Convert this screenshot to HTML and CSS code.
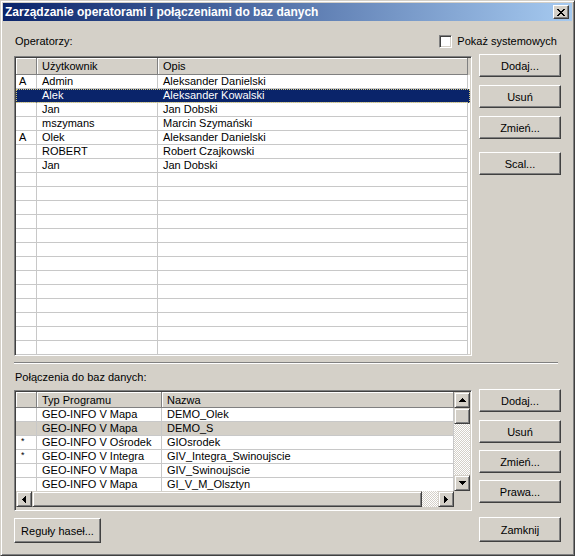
FILE: index.html
```html
<!DOCTYPE html>
<html lang="pl">
<head>
<meta charset="utf-8">
<title>Zarządzanie operatorami</title>
<link rel="stylesheet" href="styles.css">
</head>
<body>
<div class="window">
  <div class="titlebar">
    <span class="title">Zarządzanie operatorami i połączeniami do baz danych</span>
    <div class="close"><svg width="8" height="7" viewBox="0 0 8 7" shape-rendering="crispEdges"><path d="M0 0h2v1H0zM6 0h2v1H6zM1 1h2v1H1zM5 1h2v1H5zM2 2h4v1H2zM3 3h2v1H3zM2 4h4v1H2zM1 5h2v1H1zM5 5h2v1H5zM0 6h2v1H0zM6 6h2v1H6z"/></svg></div>
  </div>
  <div class="content">
    <div class="toprow">
      <span class="label">Operatorzy:</span>
      <span class="check"><span class="box"></span><span>Pokaż systemowych</span></span>
    </div>

    <div class="section sec1">
      <div class="grid grid1">
        <div class="head head1">
          <div class="hc"></div><div class="hc">Użytkownik</div><div class="hc">Opis</div>
        </div>
        <div class="rows1">
          <div class="row r1"><div class="c ind">A</div><div class="c">Admin</div><div class="c">Aleksander Danielski</div></div>
          <div class="row r1 sel"><div class="c ind"></div><div class="c">Alek</div><div class="c">Aleksander Kowalski</div></div>
          <div class="row r1"><div class="c ind"></div><div class="c">Jan</div><div class="c">Jan Dobski</div></div>
          <div class="row r1"><div class="c ind"></div><div class="c">mszymans</div><div class="c">Marcin Szymański</div></div>
          <div class="row r1"><div class="c ind">A</div><div class="c">Olek</div><div class="c">Aleksander Danielski</div></div>
          <div class="row r1"><div class="c ind"></div><div class="c">ROBERT</div><div class="c">Robert Czajkowski</div></div>
          <div class="row r1"><div class="c ind"></div><div class="c">Jan</div><div class="c">Jan Dobski</div></div>
          <div class="row r1"><div class="c ind"></div><div class="c"></div><div class="c"></div></div>
          <div class="row r1"><div class="c ind"></div><div class="c"></div><div class="c"></div></div>
          <div class="row r1"><div class="c ind"></div><div class="c"></div><div class="c"></div></div>
          <div class="row r1"><div class="c ind"></div><div class="c"></div><div class="c"></div></div>
          <div class="row r1"><div class="c ind"></div><div class="c"></div><div class="c"></div></div>
          <div class="row r1"><div class="c ind"></div><div class="c"></div><div class="c"></div></div>
          <div class="row r1"><div class="c ind"></div><div class="c"></div><div class="c"></div></div>
          <div class="row r1"><div class="c ind"></div><div class="c"></div><div class="c"></div></div>
          <div class="row r1"><div class="c ind"></div><div class="c"></div><div class="c"></div></div>
          <div class="row r1"><div class="c ind"></div><div class="c"></div><div class="c"></div></div>
          <div class="row r1"><div class="c ind"></div><div class="c"></div><div class="c"></div></div>
          <div class="row r1"><div class="c ind"></div><div class="c"></div><div class="c"></div></div>
          <div class="row r1"><div class="c ind"></div><div class="c"></div><div class="c"></div></div>
        </div>
      </div>
      <div class="buttons">
        <div class="btn">Dodaj...</div>
        <div class="btn gap8">Usuń</div>
        <div class="btn gap8">Zmień...</div>
        <div class="btn gap13">Scal...</div>
      </div>
    </div>

    <div class="separator"></div>
    <div class="label label2">Połączenia do baz danych:</div>

    <div class="section sec2">
      <div class="grid grid2">
        <div class="g2main">
          <div class="head head2">
            <div class="hc"></div><div class="hc">Typ Programu</div><div class="hc">Nazwa</div>
          </div>
          <div class="row r2"><div class="c ind"></div><div class="c">GEO-INFO V Mapa</div><div class="c">DEMO_Olek</div></div>
          <div class="row r2 inactive"><div class="c ind"></div><div class="c">GEO-INFO V Mapa</div><div class="c">DEMO_S</div></div>
          <div class="row r2"><div class="c ind star">*</div><div class="c">GEO-INFO V Ośrodek</div><div class="c">GIOsrodek</div></div>
          <div class="row r2"><div class="c ind star">*</div><div class="c">GEO-INFO V Integra</div><div class="c">GIV_Integra_Swinoujscie</div></div>
          <div class="row r2"><div class="c ind"></div><div class="c">GEO-INFO V Mapa</div><div class="c">GIV_Swinoujscie</div></div>
          <div class="row r2"><div class="c ind"></div><div class="c">GEO-INFO V Mapa</div><div class="c">GI_V_M_Olsztyn</div></div>
        </div>
        <div class="vscroll">
          <div class="sbtn"><svg width="7" height="4" viewBox="0 0 7 4" shape-rendering="crispEdges"><path d="M3 0h1v1h1v1h1v1h1v1H0V3h1V2h1V1h1z"/></svg></div>
          <div class="sbtn"></div>
          <div class="track"></div>
          <div class="sbtn"><svg width="7" height="4" viewBox="0 0 7 4" shape-rendering="crispEdges"><path d="M0 0h7v1H6v1H5v1H4v1H3V3H2V2H1V1H0z"/></svg></div>
        </div>
        <div class="hscroll">
          <div class="sbtn"><svg width="4" height="7" viewBox="0 0 4 7" shape-rendering="crispEdges"><path d="M3 0h1v7H3V6H2V5H1V4H0V3h1V2h1V1h1z"/></svg></div>
          <div class="sbtn hthumb"></div>
          <div class="track"></div>
          <div class="sbtn"><svg width="4" height="7" viewBox="0 0 4 7" shape-rendering="crispEdges"><path d="M0 0h1v1h1v1h1v1h1v1H3v1H2v1H1v1H0z"/></svg></div>
        </div>
        <div class="corner"></div>
      </div>
      <div class="buttons">
        <div class="btn">Dodaj...</div>
        <div class="btn gap8">Usuń</div>
        <div class="btn gap7">Zmień...</div>
        <div class="btn gap7">Prawa...</div>
      </div>
    </div>

    <div class="footer">
      <div class="btn btn-rules">Reguły haseł...</div>
      <div class="btn btn-close">Zamknij</div>
    </div>
  </div>
</div>
</body>
</html>
```

FILE: styles.css
```css
* { box-sizing: border-box; }
html, body { margin: 0; padding: 0; }
body {
  width: 575px;
  height: 556px;
  background: #d4d0c8;
  font-family: "Liberation Sans", Arial, sans-serif;
  font-size: 11px;
  color: #000;
  overflow: hidden;
}
.window {
  width: 575px;
  height: 556px;
  border: 1px solid;
  border-color: #d4d0c8 #404040 #404040 #d4d0c8;
  box-shadow: inset 1px 1px #fff, inset -1px -1px #808080;
  padding: 2px;
  display: flex;
  flex-direction: column;
}
.titlebar {
  height: 18px;
  flex: none;
  background: linear-gradient(to right, #0a246a, #a6caf0);
  display: flex;
  align-items: center;
  justify-content: space-between;
  padding: 0 3px 0 2px;
  color: #fff;
  font-weight: bold;
  font-size: 12px;
}
.title { white-space: nowrap; }
.close {
  width: 16px;
  height: 14px;
  background: #d4d0c8;
  border: 1px solid;
  border-color: #fff #404040 #404040 #fff;
  box-shadow: inset -1px -1px #808080;
  display: flex;
  align-items: center;
  justify-content: center;
}
.close svg { fill: #000; display: block; }
.content {
  flex: 1;
  padding: 11px 11px 0;
  display: flex;
  flex-direction: column;
}
.toprow {
  height: 18px;
  display: flex;
  align-items: center;
  justify-content: space-between;
  padding-left: 1px;
}
.check {
  display: flex;
  align-items: center;
  gap: 5px;
  margin-right: 4px;
}
.box {
  width: 13px;
  height: 13px;
  background: #fff;
  border: 1px solid;
  border-color: #808080 #fff #fff #808080;
  box-shadow: inset 1px 1px #404040, inset -1px -1px #d4d0c8;
}
.section { display: flex; gap: 7px; }
.sec1 { margin-top: 4px; }
.grid {
  width: 458px;
  border: 1px solid;
  border-color: #808080 #fff #fff #808080;
  box-shadow: inset 1px 1px #404040, inset -1px -1px #d4d0c8;
  padding: 1px;
  overflow: hidden;
}
.grid1 { margin-top: 2px; height: 300px; background: #fff; }
.head {
  display: grid;
  background: #d4d0c8;
}
.head1 { grid-template-columns: 21px 121px 310px; height: 17px; width: 454px; }
.head2 { grid-template-columns: 21px 125px 292px; height: 16px; }
.hc {
  border-right: 1px solid #808080;
  border-bottom: 1px solid #808080;
  box-shadow: inset 1px 1px #fff;
  padding-left: 5px;
  display: flex;
  align-items: center;
  white-space: nowrap;
  overflow: hidden;
}
.row { display: grid; height: 14px; line-height: 13px; }
.r1 { grid-template-columns: 21px 121px 310px; }
.r2 { grid-template-columns: 21px 125px 292px; background: #fff; }
.c {
  border-right: 1px solid #c8c8c8;
  border-bottom: 1px solid #c8c8c8;
  padding-left: 5px;
  white-space: nowrap;
  overflow: hidden;
}
.c.ind { padding-left: 3px; }
.star { font-size: 9px; line-height: 11px; padding-left: 5px !important; }
.sel { background: #0a246a; color: #fff; outline: 1px dotted #d4c87a; outline-offset: -1px; }
.sel .c { border-right-color: #0a246a; }
.inactive { background: #d4d0c8; }
.buttons { width: 82px; display: flex; flex-direction: column; }
.btn {
  height: 23px;
  background: #d4d0c8;
  border: 1px solid;
  border-color: #fff #404040 #404040 #fff;
  box-shadow: inset -1px -1px #808080, inset 1px 1px #d4d0c8;
  display: flex;
  align-items: center;
  justify-content: center;
  white-space: nowrap;
}
.gap7 { margin-top: 7px; }
.gap8 { margin-top: 8px; }
.gap13 { margin-top: 13px; }
.separator {
  margin-top: 6px;
  height: 2px;
  width: 544px;
  border-top: 1px solid #808080;
  border-bottom: 1px solid #fff;
}
.label2 { margin-top: 6px; height: 14px; line-height: 14px; padding-left: 1px; }
.sec2 { margin-top: 5px; }
.grid2 {
  margin-top: 1px;
  height: 121px;
  background: #d4d0c8;
  display: grid;
  grid-template-columns: 438px 16px;
  grid-template-rows: 99px 16px;
}
.g2main { overflow: hidden; background: #fff; }
.sbtn {
  width: 16px;
  height: 16px;
  flex: none;
  background: #d4d0c8;
  border: 1px solid;
  border-color: #d4d0c8 #404040 #404040 #d4d0c8;
  box-shadow: inset 1px 1px #fff, inset -1px -1px #808080;
  display: flex;
  align-items: center;
  justify-content: center;
}
.sbtn svg { display: block; fill: #000; }
.track {
  flex: 1;
  background: repeating-conic-gradient(#d4d0c8 0 25%, #fff 0 50%) 0 0 / 2px 2px;
}
.vscroll { display: flex; flex-direction: column; }
.hscroll { display: flex; }
.hscroll .hthumb { width: 390px; }
.corner { background: #d4d0c8; }
.footer {
  margin-top: 6px;
  display: flex;
  justify-content: space-between;
  align-items: flex-start;
}
.btn-rules { width: 87px; height: 25px; margin-top: 1px; }
.btn-close { width: 82px; height: 25px; }
```
